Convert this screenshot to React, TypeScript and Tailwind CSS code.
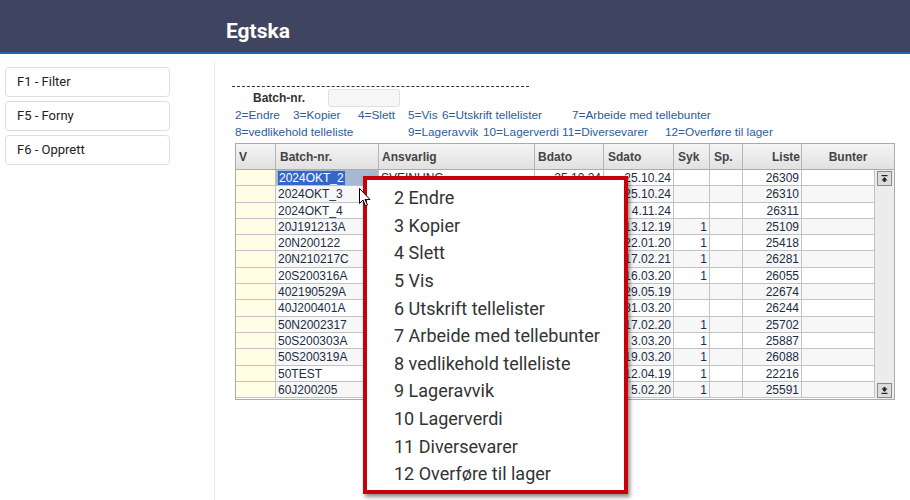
import React from "react";

const rows = [
  { b: "2024OKT_2", a: "SVEINUNG", bd: "25.10.24", sd: "25.10.24", syk: "", l: "26309" },
  { b: "2024OKT_3", a: "SVEINUNG", bd: "25.10.24", sd: "25.10.24", syk: "", l: "26310" },
  { b: "2024OKT_4", a: "SVEINUNG", bd: "4.11.24", sd: "4.11.24", syk: "", l: "26311" },
  { b: "20J191213A", a: "", bd: "13.12.19", sd: "13.12.19", syk: "1", l: "25109" },
  { b: "20N200122", a: "", bd: "22.01.20", sd: "22.01.20", syk: "1", l: "25418" },
  { b: "20N210217C", a: "", bd: "17.02.21", sd: "17.02.21", syk: "1", l: "26281" },
  { b: "20S200316A", a: "", bd: "16.03.20", sd: "16.03.20", syk: "1", l: "26055" },
  { b: "402190529A", a: "", bd: "29.05.19", sd: "29.05.19", syk: "", l: "22674" },
  { b: "40J200401A", a: "", bd: "31.03.20", sd: "31.03.20", syk: "", l: "26244" },
  { b: "50N2002317", a: "", bd: "17.02.20", sd: "17.02.20", syk: "1", l: "25702" },
  { b: "50S200303A", a: "", bd: "3.03.20", sd: "3.03.20", syk: "1", l: "25887" },
  { b: "50S200319A", a: "", bd: "19.03.20", sd: "19.03.20", syk: "1", l: "26088" },
  { b: "50TEST", a: "", bd: "12.04.19", sd: "12.04.19", syk: "1", l: "22216" },
  { b: "60J200205", a: "", bd: "5.02.20", sd: "5.02.20", syk: "1", l: "25591" },
];

const menu = [
  "2 Endre",
  "3 Kopier",
  "4 Slett",
  "5 Vis",
  "6 Utskrift tellelister",
  "7 Arbeide med tellebunter",
  "8 vedlikehold telleliste",
  "9 Lageravvik",
  "10 Lagerverdi",
  "11 Diversevarer",
  "12 Overføre til lager",
];

const roboto = { fontFamily: "Roboto, 'Noto Sans', sans-serif" };
const arial = { fontFamily: "'Liberation Sans', Arial, sans-serif" };

function UpIcon() {
  return (
    <svg width="7" height="7" viewBox="0 0 7 7">
      <rect x="0.5" y="0" width="6" height="1.2" fill="#222" />
      <path d="M3.5 2 L6.5 5.5 L0.5 5.5 Z" fill="#222" />
      <rect x="2.5" y="5" width="2" height="2" fill="#222" />
    </svg>
  );
}
function DownIcon() {
  return (
    <svg width="7" height="7" viewBox="0 0 7 7">
      <rect x="2.5" y="0" width="2" height="2" fill="#222" />
      <path d="M0.5 1.5 L6.5 1.5 L3.5 5 Z" fill="#222" />
      <rect x="0.5" y="5.8" width="6" height="1.2" fill="#222" />
    </svg>
  );
}

export default function App() {
  return (
    <div className="relative w-[910px] h-[500px] overflow-hidden bg-white">
      {/* Header */}
      <div className="h-[54px] bg-[#3f4560] border-b-2 border-[#1e6aa3] flex items-center pl-[226px] pt-[12px]">
        <span className="text-white font-bold text-[21px]" style={roboto}>
          Egtska
        </span>
      </div>

      <div className="flex pt-[7px] h-[446px]">
        {/* Sidebar */}
        <div className="w-[215px] border-r border-[#ececec] px-[5px] pt-[6px] flex flex-col gap-[4px]">
          {["F1 - Filter", "F5 - Forny", "F6 - Opprett"].map((t) => (
            <div
              key={t}
              className="w-[165px] h-[30px] border border-[#dedede] rounded-[4px] flex items-center pl-[11px] text-[13px] text-[#222]"
              style={roboto}
            >
              {t}
            </div>
          ))}
        </div>

        {/* Main */}
        <div className="flex-1 pl-[17px] pt-[25px]" style={arial}>
          <div className="w-[297px] border-t border-dashed border-[#333]" />
          <div className="flex items-center h-[18px] mt-[2px]">
            <span className="w-[96px] pl-[21px] text-[12px] font-bold text-[#333]">Batch-nr.</span>
            <div className="w-[72px] h-[18px] bg-[#f6f6f6] border border-[#e0e0e0] rounded-[3px]" />
          </div>
          <div className="pl-[3px] text-[11.8px] text-[#2e5b98] leading-[17px]">
            <div className="flex whitespace-nowrap">
              <span className="w-[58px]">2=Endre</span>
              <span className="w-[65px]">3=Kopier</span>
              <span className="w-[50px]">4=Slett</span>
              <span className="w-[34px]">5=Vis</span>
              <span className="w-[130px]">6=Utskrift tellelister</span>
              <span>7=Arbeide med tellebunter</span>
            </div>
            <div className="flex whitespace-nowrap">
              <span className="w-[173px]">8=vedlikehold telleliste</span>
              <span className="w-[75px]">9=Lageravvik</span>
              <span className="w-[79px]">10=Lagerverdi</span>
              <span className="w-[103px]">11=Diversevarer</span>
              <span>12=Overføre til lager</span>
            </div>
          </div>

          {/* Table */}
          <div className="ml-[3px] mt-[2px] w-[660px] border border-[#ababab] text-[12px]">
            <div className="flex h-[26px] bg-gradient-to-b from-[#f5f5f5] to-[#e1e1e1] border-b border-[#ababab] font-bold text-[#444]">
              <div className="w-[40px] border-r border-[#b5b5b5] flex items-center pl-[3px]">V</div>
              <div className="w-[103px] border-r border-[#b5b5b5] flex items-center pl-[4px]">Batch-nr.</div>
              <div className="w-[156px] border-r border-[#b5b5b5] flex items-center pl-[3px]">Ansvarlig</div>
              <div className="w-[69px] border-r border-[#b5b5b5] flex items-center pl-[3px]">Bdato</div>
              <div className="w-[70px] border-r border-[#b5b5b5] flex items-center pl-[4px]">Sdato</div>
              <div className="w-[36px] border-r border-[#b5b5b5] flex items-center pl-[4px]">Syk</div>
              <div className="w-[33px] border-r border-[#b5b5b5] flex items-center pl-[4px]">Sp.</div>
              <div className="w-[59px] border-r border-[#b5b5b5] flex items-center justify-end pr-[1px]">Liste</div>
              <div className="w-[92px] flex items-center justify-center">Bunter</div>
            </div>
            <div className="flex">
              <div className="w-[639px] pb-[1px]">
                {rows.map((r, i) => {
                  const bg = i % 2 === 0 ? "bg-white" : "bg-[#f7f7f7]";
                  return (
                    <div key={r.b} className={`flex h-[16.3px] border-b border-[#c2c2c2] text-[#1b2c45] leading-[16px] ${bg}`}>
                      <div className="w-[40px] border-r border-[#c2c2c2] bg-[#fffde4]" />
                      <div className={`w-[103px] border-r border-[#c2c2c2] pl-[2px] ${i === 0 ? "bg-[#a6b9d2]" : ""}`}>
                        {i === 0 ? <span className="bg-[#3468c8] text-white px-[1px]">{r.b}</span> : r.b}
                      </div>
                      <div className="w-[156px] border-r border-[#c2c2c2] pl-[2px]">{r.a}</div>
                      <div className="w-[69px] border-r border-[#c2c2c2] text-right pr-[2px]">{r.bd}</div>
                      <div className="w-[70px] border-r border-[#c2c2c2] text-right pr-[2px]">{r.sd}</div>
                      <div className="w-[36px] border-r border-[#c2c2c2] text-right pr-[2px]">{r.syk}</div>
                      <div className="w-[33px] border-r border-[#c2c2c2]" />
                      <div className="w-[59px] border-r border-[#c2c2c2] text-right pr-[2px]">{r.l}</div>
                      <div className="w-[73px] border-r border-[#c2c2c2]" />
                    </div>
                  );
                })}
              </div>
              <div className="w-[19px] bg-[#ececec] flex flex-col justify-between items-center pt-[1px] pb-[1px]">
                <div className="w-[15px] h-[15px] bg-[#dcdcdc] border border-[#8a8a8a] flex items-center justify-center">
                  <UpIcon />
                </div>
                <div className="w-[15px] h-[15px] bg-[#dcdcdc] border border-[#8a8a8a] flex items-center justify-center">
                  <DownIcon />
                </div>
              </div>
            </div>
          </div>
        </div>
      </div>

      {/* Context menu */}
      <div
        className="absolute left-[363px] top-[176px] w-[265px] h-[318px] bg-white border-[4px] border-[#c8000a] shadow-[2px_3px_4px_rgba(0,0,0,0.45)] pt-[4px] pl-[27px]"
        style={roboto}
      >
        {menu.map((m) => (
          <div key={m} className="h-[27.6px] flex items-center text-[18px] text-[#333] whitespace-nowrap">
            {m}
          </div>
        ))}
      </div>

      {/* Mouse cursor */}
      <svg className="absolute left-[359px] top-[188px]" width="12" height="19" viewBox="0 0 12 19">
        <path d="M0.5 0.5 L0.5 15.5 L4 12 L6.5 18 L8.5 17 L6 11.5 L11 11.5 Z" fill="white" stroke="black" strokeWidth="1" />
      </svg>
    </div>
  );
}
